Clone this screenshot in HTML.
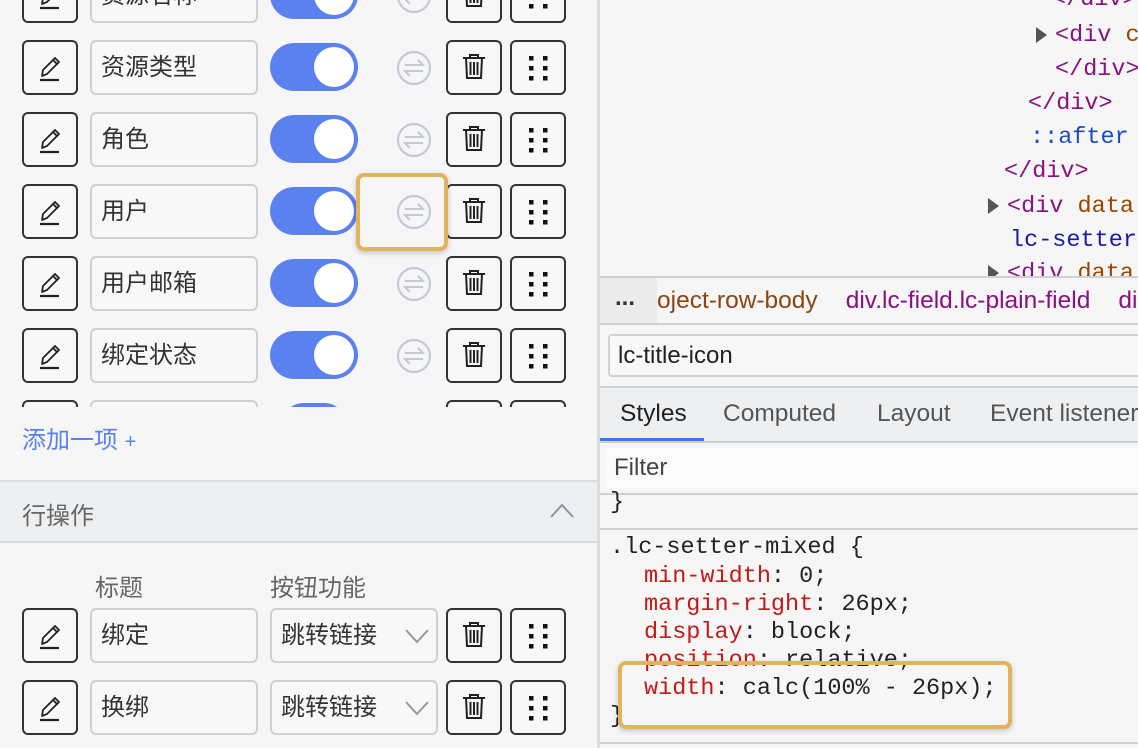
<!DOCTYPE html>
<html><head><meta charset="utf-8"><style>
*{box-sizing:border-box;margin:0;padding:0}
body{width:1138px;height:748px;overflow:hidden;background:#f6f6f6;font-family:"Liberation Sans","Noto Sans CJK SC",sans-serif;position:relative}
.a{position:absolute}
.btn{position:absolute;width:56px;height:55px;border:2px solid #333;border-radius:6px;background:#f8f8f8}
.inp{position:absolute;width:168px;height:55px;border:2px solid #cfcfd6;border-radius:6px;background:#f8f8f8;font-size:24px;color:#333;padding-left:9px;line-height:51px}
.tg{position:absolute;width:88px;height:48px;border-radius:24px;background:#5b80ef}
.tg::after{content:"";position:absolute;right:4px;top:4px;width:40px;height:40px;border-radius:50%;background:#fff}
.mono{font-family:"Liberation Mono","DejaVu Sans Mono",monospace;font-size:23.5px;position:absolute;white-space:pre}
.tag{color:#881280}.attr{color:#994500}
.line{position:absolute;background:#d0d0d4;height:2px}
</style></head><body>
<div class="a" style="left:597px;top:0;width:3px;height:748px;background:#dcdce0"></div>

<svg width="0" height="0" style="position:absolute">
<defs>
<symbol id="pen" viewBox="0 0 52 51"><path d="M18 34 L19 28 L31 16 L35 20 L23 32 Z M29 18 L33 22" fill="none" stroke="#222" stroke-width="1.8" stroke-linejoin="round"/><path d="M16 38 H35" stroke="#222" stroke-width="2.2"/></symbol>
<symbol id="trash" viewBox="0 0 52 51"><path d="M15 16 H37 M22 16 V13 H30 V16 M18 16 L19 36 H33 L34 16 M22.5 20 V33 M26 20 V33 M29.5 20 V33" fill="none" stroke="#222" stroke-width="2"/></symbol>
<symbol id="drag" viewBox="0 0 52 51"><g fill="#111"><rect x="17" y="14" width="4.5" height="4.5"/><rect x="31" y="14" width="4.5" height="4.5"/><rect x="17" y="24" width="4.5" height="4.5"/><rect x="31" y="24" width="4.5" height="4.5"/><rect x="17" y="34" width="4.5" height="4.5"/><rect x="31" y="34" width="4.5" height="4.5"/></g></symbol>
<symbol id="swap" viewBox="0 0 36 36"><circle cx="18" cy="18" r="16" fill="none" stroke="#c5c9d6" stroke-width="2.2"/><path d="M9 15 H27 L22 10 M27 21 H9 L14 26" fill="none" stroke="#c5c9d6" stroke-width="2"/></symbol>
</defs></svg>

<div class="btn" style="left:22px;top:-32px"><svg width="52" height="51"><use href="#pen"/></svg></div>
<div class="inp" style="left:90px;top:-32px">资源名称</div>
<div class="tg" style="left:270px;top:-29px"></div>
<svg class="a" style="left:396px;top:-22px" width="36" height="36"><use href="#swap"/></svg>
<div class="btn" style="left:446px;top:-32px"><svg width="52" height="51"><use href="#trash"/></svg></div>
<div class="btn" style="left:510px;top:-32px"><svg width="52" height="51"><use href="#drag"/></svg></div>

<div class="btn" style="left:22px;top:40px"><svg width="52" height="51"><use href="#pen"/></svg></div>
<div class="inp" style="left:90px;top:40px">资源类型</div>
<div class="tg" style="left:270px;top:43px"></div>
<svg class="a" style="left:396px;top:50px" width="36" height="36"><use href="#swap"/></svg>
<div class="btn" style="left:446px;top:40px"><svg width="52" height="51"><use href="#trash"/></svg></div>
<div class="btn" style="left:510px;top:40px"><svg width="52" height="51"><use href="#drag"/></svg></div>

<div class="btn" style="left:22px;top:112px"><svg width="52" height="51"><use href="#pen"/></svg></div>
<div class="inp" style="left:90px;top:112px">角色</div>
<div class="tg" style="left:270px;top:115px"></div>
<svg class="a" style="left:396px;top:122px" width="36" height="36"><use href="#swap"/></svg>
<div class="btn" style="left:446px;top:112px"><svg width="52" height="51"><use href="#trash"/></svg></div>
<div class="btn" style="left:510px;top:112px"><svg width="52" height="51"><use href="#drag"/></svg></div>

<div class="btn" style="left:22px;top:184px"><svg width="52" height="51"><use href="#pen"/></svg></div>
<div class="inp" style="left:90px;top:184px">用户</div>
<div class="tg" style="left:270px;top:187px"></div>
<svg class="a" style="left:396px;top:194px" width="36" height="36"><use href="#swap"/></svg>
<div class="btn" style="left:446px;top:184px"><svg width="52" height="51"><use href="#trash"/></svg></div>
<div class="btn" style="left:510px;top:184px"><svg width="52" height="51"><use href="#drag"/></svg></div>

<div class="btn" style="left:22px;top:256px"><svg width="52" height="51"><use href="#pen"/></svg></div>
<div class="inp" style="left:90px;top:256px">用户邮箱</div>
<div class="tg" style="left:270px;top:259px"></div>
<svg class="a" style="left:396px;top:266px" width="36" height="36"><use href="#swap"/></svg>
<div class="btn" style="left:446px;top:256px"><svg width="52" height="51"><use href="#trash"/></svg></div>
<div class="btn" style="left:510px;top:256px"><svg width="52" height="51"><use href="#drag"/></svg></div>

<div class="btn" style="left:22px;top:328px"><svg width="52" height="51"><use href="#pen"/></svg></div>
<div class="inp" style="left:90px;top:328px">绑定状态</div>
<div class="tg" style="left:270px;top:331px"></div>
<svg class="a" style="left:396px;top:338px" width="36" height="36"><use href="#swap"/></svg>
<div class="btn" style="left:446px;top:328px"><svg width="52" height="51"><use href="#trash"/></svg></div>
<div class="btn" style="left:510px;top:328px"><svg width="52" height="51"><use href="#drag"/></svg></div>

<div class="a" style="left:0;top:400px;width:597px;height:7px;overflow:hidden">
<div class="btn" style="left:22px;top:0"></div>
<div class="inp" style="left:90px;top:0"></div>
<div class="tg" style="left:280px;top:3px;width:68px"></div>
<div class="btn" style="left:446px;top:0"></div>
<div class="btn" style="left:510px;top:0"></div>
</div>

<div class="a" style="left:356px;top:173px;width:92px;height:78px;border:4px solid #e0b35e;border-radius:8px;box-shadow:0 2px 6px rgba(0,0,0,.2)"></div>

<div class="a" style="left:22px;top:420px;font-size:24px;color:#5b80ef">添加一项 <span style="font-size:20px">+</span></div>

<div class="a" style="left:0;top:480px;width:597px;height:63px;background:#eeeff1;border-top:2px solid #dcdce0;border-bottom:2px solid #dcdce0"></div>
<div class="a" style="left:22px;top:496px;font-size:24px;color:#666">行操作</div>
<svg class="a" style="left:549px;top:500px" width="26" height="20"><path d="M2 17 L13 5 L24 17" fill="none" stroke="#8a93a8" stroke-width="2"/></svg>

<div class="a" style="left:95px;top:568px;font-size:24px;color:#666">标题</div>
<div class="a" style="left:270px;top:568px;font-size:24px;color:#666">按钮功能</div>

<div class="btn" style="left:22px;top:608px"><svg width="52" height="51"><use href="#pen"/></svg></div>
<div class="inp" style="left:90px;top:608px">绑定</div>
<div class="inp" style="left:270px;top:608px">跳转链接<svg class="a" style="left:132px;top:17px" width="26" height="18"><path d="M2 3 L13 15 L24 3" fill="none" stroke="#999" stroke-width="2"/></svg></div>
<div class="btn" style="left:446px;top:608px"><svg width="52" height="51"><use href="#trash"/></svg></div>
<div class="btn" style="left:510px;top:608px"><svg width="52" height="51"><use href="#drag"/></svg></div>

<div class="btn" style="left:22px;top:680px"><svg width="52" height="51"><use href="#pen"/></svg></div>
<div class="inp" style="left:90px;top:680px">换绑</div>
<div class="inp" style="left:270px;top:680px">跳转链接<svg class="a" style="left:132px;top:17px" width="26" height="18"><path d="M2 3 L13 15 L24 3" fill="none" stroke="#999" stroke-width="2"/></svg></div>
<div class="btn" style="left:446px;top:680px"><svg width="52" height="51"><use href="#trash"/></svg></div>
<div class="btn" style="left:510px;top:680px"><svg width="52" height="51"><use href="#drag"/></svg></div>

<div class="mono tag" style="left:1052px;top:-14px">&lt;/div&gt;</div>
<svg class="a" style="left:1036px;top:27px" width="12" height="16"><path d="M0 0 L11 8 L0 16Z" fill="#555"/></svg>
<div class="mono" style="left:1055px;top:22px"><span class="tag">&lt;div </span><span class="attr">c</span></div>
<div class="mono tag" style="left:1055px;top:56px">&lt;/div&gt;</div>
<div class="mono tag" style="left:1028px;top:90px">&lt;/div&gt;</div>
<div class="mono" style="left:1030px;top:124px;color:#1a4dc4">::after</div>
<div class="mono tag" style="left:1004px;top:158px">&lt;/div&gt;</div>
<svg class="a" style="left:988px;top:198px" width="12" height="16"><path d="M0 0 L11 8 L0 16Z" fill="#555"/></svg>
<div class="mono" style="left:1007px;top:193px"><span class="tag">&lt;div </span><span class="attr">data</span></div>
<div class="mono" style="left:1010px;top:227px;color:#1a1aa6">lc-setter</div>
<svg class="a" style="left:988px;top:265px" width="12" height="16"><path d="M0 0 L11 8 L0 16Z" fill="#555"/></svg>
<div class="mono" style="left:1007px;top:260px"><span class="tag">&lt;div </span><span class="attr">data</span></div>

<div class="a" style="left:600px;top:276px;width:538px;height:472px;background:#f6f6f6"></div>
<div class="line" style="left:600px;top:276px;width:538px"></div>
<div class="a" style="left:600px;top:278px;width:57px;height:46px;background:#ebebeb"></div>
<div class="a" style="left:615px;top:284px;font-size:24px;color:#333;font-weight:bold">...</div>
<div class="a" style="left:657px;top:287px;font-size:24.5px;white-space:nowrap"><span style="color:#8b4513">oject-row-body</span><span style="color:#881280;margin-left:28px">div.lc-field.lc-plain-field</span><span style="color:#881280;margin-left:28px">di</span></div>
<div class="line" style="left:600px;top:323px;width:538px"></div>
<div class="a" style="left:608px;top:334px;width:540px;height:43px;border:2px solid #d0d0d4;border-radius:4px;background:#f8f8f8;font-size:24px;color:#222;padding:6px 0 0 8px">lc-title-icon</div>
<div class="line" style="left:600px;top:386px;width:538px"></div>
<div class="a" style="left:600px;top:388px;width:538px;height:53px;background:#eeeff1"></div>
<div class="a" style="left:620px;top:400px;font-size:24.5px;color:#222">Styles</div>
<div class="a" style="left:723px;top:400px;font-size:24.5px;color:#555">Computed</div>
<div class="a" style="left:877px;top:400px;font-size:24.5px;color:#555">Layout</div>
<div class="a" style="left:990px;top:400px;font-size:24.5px;color:#555;white-space:nowrap">Event listeners</div>
<div class="a" style="left:600px;top:438px;width:104px;height:3px;background:#3b78e7"></div>
<div class="line" style="left:600px;top:441px;width:538px"></div>
<div class="a" style="left:606px;top:448px;width:532px;height:40px;background:#fbfbfb;font-size:24px;color:#444;padding:6px 0 0 8px">Filter</div>
<div class="line" style="left:600px;top:493px;width:538px"></div>
<div class="mono" style="left:610px;top:489px;color:#222">}</div>
<div class="line" style="left:600px;top:528px;width:538px"></div>
<div class="mono" style="left:610px;top:534px;color:#222">.lc-setter-mixed {</div>
<div class="mono" style="left:644px;top:563px;color:#222"><span style="color:#c41a16">min-width</span>: 0;</div>
<div class="mono" style="left:644px;top:591px;color:#222"><span style="color:#c41a16">margin-right</span>: 26px;</div>
<div class="mono" style="left:644px;top:619px;color:#222"><span style="color:#c41a16">display</span>: block;</div>
<div class="mono" style="left:644px;top:647px;color:#222"><span style="color:#c41a16">position</span>: relative;</div>
<div class="mono" style="left:644px;top:675px;color:#222"><span style="color:#c41a16">width</span>: calc(100% - 26px);</div>
<div class="mono" style="left:610px;top:703px;color:#222">}</div>
<div class="line" style="left:600px;top:742px;width:538px"></div>
<div class="a" style="left:618px;top:661px;width:394px;height:68px;border:4px solid #e0b35e;border-radius:8px;box-shadow:0 2px 6px rgba(0,0,0,.2)"></div>
</body></html>
